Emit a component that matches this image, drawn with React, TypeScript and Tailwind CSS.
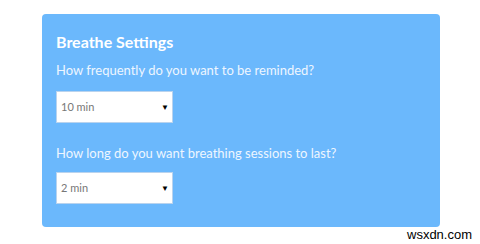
import React from 'react';

function Dropdown({ value }: { value: string }) {
  return (
    <div className="w-[117px] h-[32px] bg-white border border-[#b9d3ee] flex items-center justify-between pl-[4px] pr-[3px]">
      <span className="text-[11px] text-[#777]">{value}</span>
      <span className="text-[8px] text-black leading-none">▼</span>
    </div>
  );
}

export default function App() {
  return (
    <div className="w-[480px] h-[244px] bg-white relative font-['Lato',sans-serif]">
      <div className="pt-[14px] pl-[42px]">
        <div className="w-[398px] h-[213px] bg-[#6bb8fc] rounded-[4px] pl-[14px] pt-[20px]">
          <h2 className="text-[16px] font-bold text-white leading-none">Breathe Settings</h2>
          <p className="mt-[14px] text-[13px] text-[#eef6ff] leading-none">How frequently do you want to be reminded?</p>
          <div className="mt-[14px]">
            <Dropdown value="10 min" />
          </div>
          <p className="mt-[24px] text-[13px] text-[#eef6ff] leading-none">How long do you want breathing sessions to last?</p>
          <div className="mt-[12px]">
            <Dropdown value="2 min" />
          </div>
        </div>
      </div>
      <span className="absolute left-[407px] top-[228px] text-[13px] text-black font-['Liberation_Sans',sans-serif] leading-none">wsxdn.com</span>
    </div>
  );
}
